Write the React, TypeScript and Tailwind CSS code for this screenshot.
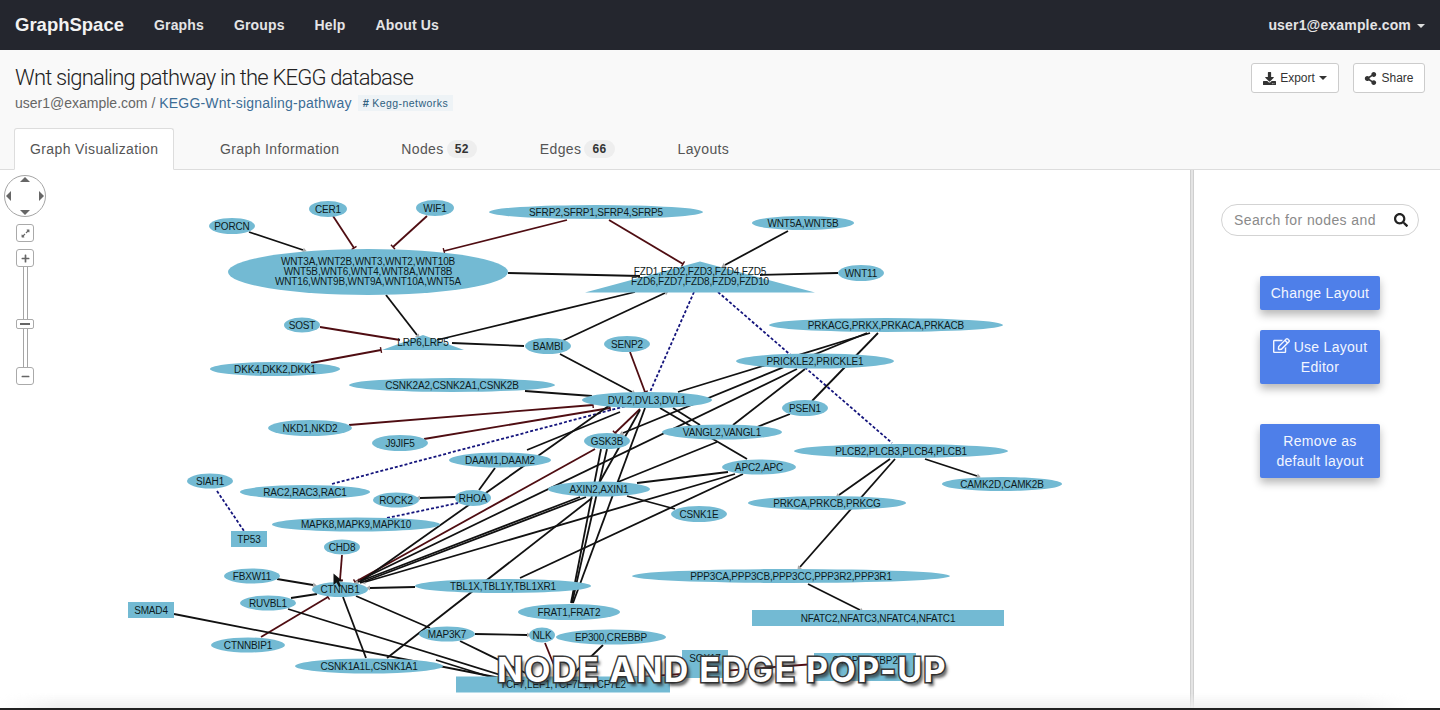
import { FaDownload, FaExpandAlt, FaMinus, FaPlus, FaRegEdit, FaSearch, FaShareAlt } from "react-icons/fa";

type Shape = "ellipse" | "rect" | "tri";
type GraphNode = { lines: string[]; x: number; y: number; rx: number; ry: number; shape?: Shape; labelY?: number };
type Kind = "black" | "red" | "dash";
type Head = "arrow" | "tee";
type GraphEdge = [number, number, number, number, Kind?, Head?];

const NODES: GraphNode[] = [
	{ lines: ["PORCN"], x: 232, y: 226, rx: 23, ry: 8 },
	{ lines: ["CER1"], x: 328, y: 209, rx: 19, ry: 8 },
	{ lines: ["WIF1"], x: 435, y: 208, rx: 19, ry: 8 },
	{ lines: ["SFRP2,SFRP1,SFRP4,SFRP5"], x: 596, y: 212, rx: 107, ry: 7 },
	{ lines: ["WNT5A,WNT5B"], x: 803, y: 223, rx: 51, ry: 7 },
	{ lines: ["WNT3A,WNT2B,WNT3,WNT2,WNT10B", "WNT5B,WNT6,WNT4,WNT8A,WNT8B", "WNT16,WNT9B,WNT9A,WNT10A,WNT5A"], x: 368, y: 272, rx: 140, ry: 23, labelY: 271 },
	{ lines: ["FZD1,FZD2,FZD3,FZD4,FZD5", "FZD6,FZD7,FZD8,FZD9,FZD10"], x: 700, y: 277, rx: 115, ry: 15.5, shape: "tri", labelY: 276 },
	{ lines: ["WNT11"], x: 861, y: 273, rx: 23, ry: 8 },
	{ lines: ["SOST"], x: 302, y: 325, rx: 18, ry: 7.5 },
	{ lines: ["LRP6,LRP5"], x: 423, y: 342.5, rx: 41, ry: 7.5, shape: "tri" },
	{ lines: ["BAMBI"], x: 548, y: 346, rx: 23, ry: 8 },
	{ lines: ["SENP2"], x: 627, y: 344, rx: 23, ry: 8 },
	{ lines: ["PRKACG,PRKX,PRKACA,PRKACB"], x: 886, y: 325, rx: 117, ry: 7 },
	{ lines: ["PRICKLE2,PRICKLE1"], x: 815, y: 361, rx: 79, ry: 7.5 },
	{ lines: ["DKK4,DKK2,DKK1"], x: 275, y: 369, rx: 65, ry: 7 },
	{ lines: ["CSNK2A2,CSNK2A1,CSNK2B"], x: 452, y: 385, rx: 103, ry: 7 },
	{ lines: ["DVL2,DVL3,DVL1"], x: 647, y: 400, rx: 65, ry: 8 },
	{ lines: ["PSEN1"], x: 805, y: 408, rx: 23, ry: 8 },
	{ lines: ["NKD1,NKD2"], x: 310, y: 428, rx: 42, ry: 8 },
	{ lines: ["J9JIF5"], x: 400, y: 443, rx: 28, ry: 8 },
	{ lines: ["GSK3B"], x: 607, y: 441, rx: 23, ry: 8 },
	{ lines: ["VANGL2,VANGL1"], x: 722, y: 432, rx: 60, ry: 7.5 },
	{ lines: ["PLCB2,PLCB3,PLCB4,PLCB1"], x: 901, y: 451, rx: 107, ry: 7 },
	{ lines: ["DAAM1,DAAM2"], x: 500, y: 460, rx: 51, ry: 7.5 },
	{ lines: ["APC2,APC"], x: 759, y: 467, rx: 37, ry: 7.5 },
	{ lines: ["SIAH1"], x: 210, y: 481, rx: 23, ry: 7.5 },
	{ lines: ["RAC2,RAC3,RAC1"], x: 305, y: 492, rx: 65, ry: 7 },
	{ lines: ["AXIN2,AXIN1"], x: 599, y: 489, rx: 51, ry: 7.5 },
	{ lines: ["ROCK2"], x: 396, y: 500, rx: 23, ry: 7.5 },
	{ lines: ["RHOA"], x: 473, y: 498, rx: 18, ry: 8 },
	{ lines: ["PRKCA,PRKCB,PRKCG"], x: 827, y: 503, rx: 79, ry: 7 },
	{ lines: ["CAMK2D,CAMK2B"], x: 1002, y: 484, rx: 60, ry: 7 },
	{ lines: ["CSNK1E"], x: 699, y: 514, rx: 28, ry: 8 },
	{ lines: ["MAPK8,MAPK9,MAPK10"], x: 356, y: 524.5, rx: 84, ry: 7 },
	{ lines: ["TP53"], x: 249, y: 539, rx: 18, ry: 8, shape: "rect" },
	{ lines: ["CHD8"], x: 342, y: 547, rx: 18, ry: 7.5 },
	{ lines: ["FBXW11"], x: 252, y: 576, rx: 28, ry: 7.5 },
	{ lines: ["PPP3CA,PPP3CB,PPP3CC,PPP3R2,PPP3R1"], x: 791, y: 576, rx: 159, ry: 7 },
	{ lines: ["TBL1X,TBL1Y,TBL1XR1"], x: 503, y: 586, rx: 88, ry: 7 },
	{ lines: ["CTNNB1"], x: 340, y: 589.5, rx: 28, ry: 7.5 },
	{ lines: ["RUVBL1"], x: 268, y: 603, rx: 28, ry: 7.5 },
	{ lines: ["SMAD4"], x: 151, y: 610, rx: 23, ry: 8, shape: "rect" },
	{ lines: ["FRAT1,FRAT2"], x: 569, y: 612, rx: 51, ry: 8 },
	{ lines: ["NFATC2,NFATC3,NFATC4,NFATC1"], x: 878, y: 618, rx: 126, ry: 8, shape: "rect" },
	{ lines: ["CTNNBIP1"], x: 248, y: 645, rx: 37, ry: 7.5 },
	{ lines: ["MAP3K7"], x: 447, y: 634, rx: 28, ry: 7.5 },
	{ lines: ["NLK"], x: 542, y: 635, rx: 13, ry: 7.5 },
	{ lines: ["EP300,CREBBP"], x: 611, y: 637, rx: 55, ry: 7.5 },
	{ lines: ["CSNK1A1L,CSNK1A1"], x: 369, y: 666, rx: 74, ry: 7.5 },
	{ lines: ["SOX17"], x: 705, y: 664, rx: 23, ry: 14, shape: "rect", labelY: 658 },
	{ lines: ["CTBP1,CTBP2"], x: 865, y: 667, rx: 51, ry: 14, shape: "rect", labelY: 660 },
	{ lines: ["TCF7,LEF1,TCF7L1,TCF7L2"], x: 563, y: 684.5, rx: 107, ry: 8, shape: "rect" },
];

const EDGES: GraphEdge[] = [
	[249, 232, 303, 250, "black", "arrow"],
	[333, 216, 354, 248, "red", "tee"],
	[427, 216, 393, 247, "red", "tee"],
	[567, 220, 444, 251, "red", "tee"],
	[609, 220, 683, 264, "red", "tee"],
	[788, 231, 725, 265, "black", "arrow"],
	[508, 273, 640, 276],
	[760, 275, 838, 273],
	[386, 295, 417, 335, "black", "arrow"],
	[320, 327, 400, 340, "red"],
	[311, 363, 381, 350, "red", "tee"],
	[437, 340, 635, 292],
	[452, 343, 524, 346],
	[560, 342, 665, 293, "black", "arrow"],
	[560, 354, 632, 392, "black", "arrow"],
	[630, 352, 645, 392, "red", "tee"],
	[525, 391, 592, 396],
	[349, 425, 593, 405, "red", "tee"],
	[424, 439, 610, 408, "red", "tee"],
	[527, 450, 620, 412],
	[495, 468, 479, 490],
	[456, 497, 420, 498, "black", "arrow"],
	[694, 292, 650, 392, "dash"],
	[718, 292, 892, 443, "dash"],
	[332, 484, 630, 405, "dash"],
	[387, 518, 458, 503, "dash"],
	[217, 491, 244, 531, "dash"],
	[870, 333, 678, 392],
	[867, 333, 623, 433, "black", "arrow"],
	[878, 333, 812, 401],
	[805, 369, 733, 425],
	[797, 369, 360, 580, "black", "arrow"],
	[790, 414, 757, 427],
	[660, 408, 747, 459],
	[673, 408, 700, 425],
	[640, 409, 615, 433, "red", "tee"],
	[717, 442, 618, 482],
	[728, 472, 637, 483],
	[735, 474, 365, 582, "black", "arrow"],
	[743, 474, 520, 578],
	[627, 496, 675, 509],
	[595, 449, 355, 582, "red", "tee"],
	[645, 408, 573, 603],
	[640, 410, 598, 485],
	[607, 449, 572, 603],
	[601, 449, 571, 603],
	[580, 497, 358, 582, "black", "arrow"],
	[586, 497, 360, 583],
	[610, 405, 360, 582],
	[592, 498, 387, 658],
	[415, 587, 370, 588, "black", "arrow"],
	[342, 555, 340, 580, "red", "tee"],
	[277, 579, 313, 585, "black", "arrow"],
	[291, 598, 317, 594],
	[261, 637, 328, 597, "red", "tee"],
	[343, 597, 366, 658],
	[356, 596, 430, 628],
	[288, 609, 510, 678],
	[174, 614, 500, 678],
	[436, 660, 500, 680],
	[475, 634, 527, 635, "black", "arrow"],
	[460, 641, 540, 680],
	[545, 643, 560, 680, "red"],
	[603, 645, 570, 677],
	[600, 680, 815, 664, "red"],
	[890, 459, 839, 495, "black", "arrow"],
	[895, 459, 800, 567, "black", "arrow"],
	[925, 459, 977, 476, "black", "arrow"],
	[808, 584, 860, 610, "black", "arrow"],
];

const EDGE_COLOR: Record<Kind, string> = { black: "#111111", red: "#4f0d12", dash: "#14147c" };

function EdgeLine({ edge }: { edge: GraphEdge }) {
	const [x1, y1, x2, y2, kind = "black", head] = edge;
	const len = Math.hypot(x2 - x1, y2 - y1);
	const ux = (x2 - x1) / len;
	const uy = (y2 - y1) / len;
	return (
		<g>
			<line
				x1={x1}
				y1={y1}
				x2={x2}
				y2={y2}
				stroke={EDGE_COLOR[kind]}
				strokeWidth={1.8}
				strokeDasharray={kind === "dash" ? "3 2" : undefined}
			/>
			{head === "arrow" && (
				<polygon
					points={`${x2 + ux * 4},${y2 + uy * 4} ${x2 - uy * 2.5},${y2 + ux * 2.5} ${x2 + uy * 2.5},${y2 - ux * 2.5}`}
					fill="#a9a9a9"
				/>
			)}
			{head === "tee" && (
				<line
					x1={x2 - uy * 3}
					y1={y2 + ux * 3}
					x2={x2 + uy * 3}
					y2={y2 - ux * 3}
					stroke={EDGE_COLOR[kind]}
					strokeWidth={1.4}
				/>
			)}
		</g>
	);
}

function NodeShape({ node }: { node: GraphNode }) {
	const { x, y, rx, ry, shape = "ellipse" } = node;
	if (shape === "rect") return <rect x={x - rx} y={y - ry} width={rx * 2} height={ry * 2} fill="#73bad3" />;
	if (shape === "tri")
		return <polygon points={`${x},${y - ry} ${x + rx},${y + ry} ${x - rx},${y + ry}`} fill="#73bad3" />;
	return <ellipse cx={x} cy={y} rx={rx} ry={ry} fill="#73bad3" />;
}

function NodeLabel({ node }: { node: GraphNode }) {
	const top = (node.labelY ?? node.y) - ((node.lines.length - 1) * 10) / 2;
	return (
		<text
			textAnchor="middle"
			fontSize="10"
			letterSpacing="-0.15"
			fill="#0d1a20"
			className="font-['Liberation_Sans',sans-serif]"
		>
			{node.lines.map((line, i) => (
				<tspan key={line} x={node.x} y={top + i * 10 + 3.6}>
					{line}
				</tspan>
			))}
		</text>
	);
}

function GraphCanvas() {
	return (
		<svg viewBox="0 170 1190 540" className="block h-[540px] w-[1190px]">
			{EDGES.map((edge) => (
				<EdgeLine key={edge.join("-")} edge={edge} />
			))}
			{NODES.map((node) => (
				<NodeShape key={node.lines[0]} node={node} />
			))}
			{NODES.map((node) => (
				<NodeLabel key={node.lines[0]} node={node} />
			))}
			<path d="M333.5 573.5 L333.5 585 L336.5 582.5 L339 587 L341 586 L339 581.5 L343 581.5 Z" fill="#111111" />
		</svg>
	);
}

function ZoomButton({ children }: { children: React.ReactNode }) {
	return (
		<div className="flex h-[18px] w-[18px] items-center justify-center rounded-[3px] border border-[#aaaaaa] bg-white text-[10px] text-[#666666]">
			{children}
		</div>
	);
}

function PanZoom() {
	return (
		<div className="absolute left-[4px] top-[5px] flex w-[42px] flex-col items-center">
			<div className="relative h-[42px] w-[42px] rounded-full border border-[#a5a5a5] bg-white">
				<span className="absolute left-1/2 top-[1px] h-0 w-0 -translate-x-1/2 border-x-[5px] border-b-[5px] border-x-transparent border-b-[#666666]" />
				<span className="absolute bottom-[1px] left-1/2 h-0 w-0 -translate-x-1/2 border-x-[5px] border-t-[5px] border-x-transparent border-t-[#666666]" />
				<span className="absolute left-[1px] top-1/2 h-0 w-0 -translate-y-1/2 border-y-[5px] border-r-[5px] border-y-transparent border-r-[#666666]" />
				<span className="absolute right-[1px] top-1/2 h-0 w-0 -translate-y-1/2 border-y-[5px] border-l-[5px] border-y-transparent border-l-[#666666]" />
			</div>
			<div className="mt-[7px]">
				<ZoomButton>
					<FaExpandAlt className="text-[9px]" />
				</ZoomButton>
			</div>
			<div className="mt-[7px]">
				<ZoomButton>
					<FaPlus className="text-[9px]" />
				</ZoomButton>
			</div>
			<div className="h-[52px] w-[5px] border-x border-[#a5a5a5]" />
			<div className="h-[10px] w-[18px] rounded-[2px] border border-[#aaaaaa] bg-white">
				<div className="mx-[3px] mt-[3px] h-[2px] bg-[#666666]" />
			</div>
			<div className="h-[38px] w-[5px] border-x border-[#a5a5a5]" />
			<ZoomButton>
				<FaMinus className="text-[9px]" />
			</ZoomButton>
		</div>
	);
}

function LayoutButton({ children, className }: { children: React.ReactNode; className: string }) {
	return (
		<button
			className={`block w-[120px] rounded-[2px] bg-[#4e7fe9] px-[8px] py-[7px] text-center text-[14px] leading-[20px] tracking-[0.28px] text-[#f2f6ff] shadow-[0_5px_9px_rgba(0,0,0,0.28)] ${className}`}
		>
			{children}
		</button>
	);
}

export default function App() {
	return (
		<div className="relative flex h-[710px] w-[1440px] flex-col overflow-hidden bg-white font-['Liberation_Sans',Arial,sans-serif]">
			<nav className="flex h-[50px] shrink-0 items-center bg-[#24262e] pl-[15px] pr-[15px] text-[#e4e4e6]">
				<span className="w-[109px] text-[18.5px] font-bold text-[#f2f2f2]">GraphSpace</span>
				<div className="ml-[30px] flex gap-[30px] text-[14px] font-bold tracking-[0.15px]">
					<span>Graphs</span>
					<span>Groups</span>
					<span>Help</span>
					<span>About Us</span>
				</div>
				<div className="ml-auto flex items-center gap-[6px] text-[14px] font-bold tracking-[0.17px]">
					<span>user1@example.com</span>
					<span className="mt-[2px] h-0 w-0 border-x-[4px] border-t-[4px] border-x-transparent border-t-[#dddddd]" />
				</div>
			</nav>

			<header className="relative h-[120px] shrink-0 border-b border-[#dddddd] bg-[#f9f9f9]">
				<div className="flex items-start justify-between pl-[15px] pr-[15px] pt-[13px]">
					<div>
						<h1 className="font-['Roboto',sans-serif] text-[22px] font-light leading-[30px] tracking-[-0.83px] text-[#222222]">
							Wnt signaling pathway in the KEGG database
						</h1>
						<div className="flex items-center text-[14px] leading-[20px] text-[#666666]">
							<span>user1@example.com /&nbsp;</span>
							<span className="tracking-[0.22px] text-[#3c6d96]">KEGG-Wnt-signaling-pathway</span>
							<span className="ml-[6px] flex items-center gap-[3px] bg-[#eef3f6] px-[5px] py-[2px] text-[10.5px] leading-[12px] tracking-[0.45px] text-[#2f6080]">
								<b className="text-[11px]">#</b> Kegg-networks
							</span>
						</div>
					</div>
					<div className="flex gap-[14px]">
						<button className="flex h-[30px] w-[88px] items-center justify-center gap-[4px] rounded-[3px] border border-[#cccccc] bg-white text-[12px] text-[#333333]">
							<FaDownload className="text-[13px]" />
							<span>Export</span>
							<span className="h-0 w-0 border-x-[4px] border-t-[4px] border-x-transparent border-t-[#333333]" />
						</button>
						<button className="flex h-[30px] w-[72px] items-center justify-center gap-[4px] rounded-[3px] border border-[#cccccc] bg-white text-[12px] text-[#333333]">
							<FaShareAlt className="text-[13px]" />
							<span>Share</span>
						</button>
					</div>
				</div>
				<div className="absolute -bottom-px left-[14px] flex h-[42px] items-stretch whitespace-nowrap text-[14px] tracking-[0.38px] text-[#555555]">
					<div className="flex w-[160px] items-center rounded-t-[3px] border border-b-white border-[#dddddd] bg-white px-[15px]">
						Graph Visualization
					</div>
					<div className="ml-[31px] flex items-center px-[15px]">Graph Information</div>
					<div className="ml-[32px] flex items-center gap-[3px] px-[15px]">
						Nodes
						<span className="rounded-full bg-[#eeeeee] px-[8px] py-[2px] text-[12px] font-bold leading-[14px] text-[#333333]">52</span>
					</div>
					<div className="ml-[33px] flex items-center gap-[3px] px-[15px]">
						Edges
						<span className="rounded-full bg-[#eeeeee] px-[8px] py-[2px] text-[12px] font-bold leading-[14px] text-[#333333]">66</span>
					</div>
					<div className="ml-[33px] flex items-center px-[15px]">Layouts</div>
				</div>
			</header>

			<main className="flex min-h-0 flex-1">
				<div className="relative w-[1190px] shrink-0">
					<GraphCanvas />
					<PanZoom />
				</div>
				<div className="w-[4px] shrink-0 border-x border-[#cfcfcf] bg-[#e4e4e4]" />
				<aside className="flex flex-1 flex-col items-center pl-[6px] pt-[34px]">
					<div className="flex h-[32px] w-[198px] items-center rounded-full border border-[#d3d3d3] pl-[12px] pr-[10px]">
						<span className="whitespace-nowrap text-[14px] tracking-[0.4px] text-[#8a8a8a]">Search for nodes and</span>
						<FaSearch className="ml-auto text-[14px] text-[#222222]" />
					</div>
					<LayoutButton className="mt-[40px] h-[34px]">Change Layout</LayoutButton>
					<LayoutButton className="mt-[20px] h-[54px]">
						<FaRegEdit className="mr-[4px] inline-block text-[17px] align-[-2px]" />
						Use Layout Editor
					</LayoutButton>
					<LayoutButton className="mt-[40px] h-[54px]">Remove as default layout</LayoutButton>
				</aside>
			</main>

			<div className="absolute inset-x-0 bottom-0 h-[17px] bg-gradient-to-b from-transparent to-[#eeeeee] [mask-image:linear-gradient(to_right,transparent,black_4%,black_94%,transparent_98%)]" />
			<div className="absolute inset-x-0 bottom-0 h-[2px] bg-[#222222]" />
			<div className="absolute left-[497px] top-[650px] whitespace-nowrap font-['Inter',sans-serif] text-[34px] font-bold leading-[40px] tracking-[1.45px] text-white [-webkit-text-stroke:3px_#3a3a3a] [paint-order:stroke_fill] [text-shadow:3px_4px_3px_rgba(40,40,40,0.7)]">
				NODE AND EDGE POP-UP
			</div>
		</div>
	);
}
